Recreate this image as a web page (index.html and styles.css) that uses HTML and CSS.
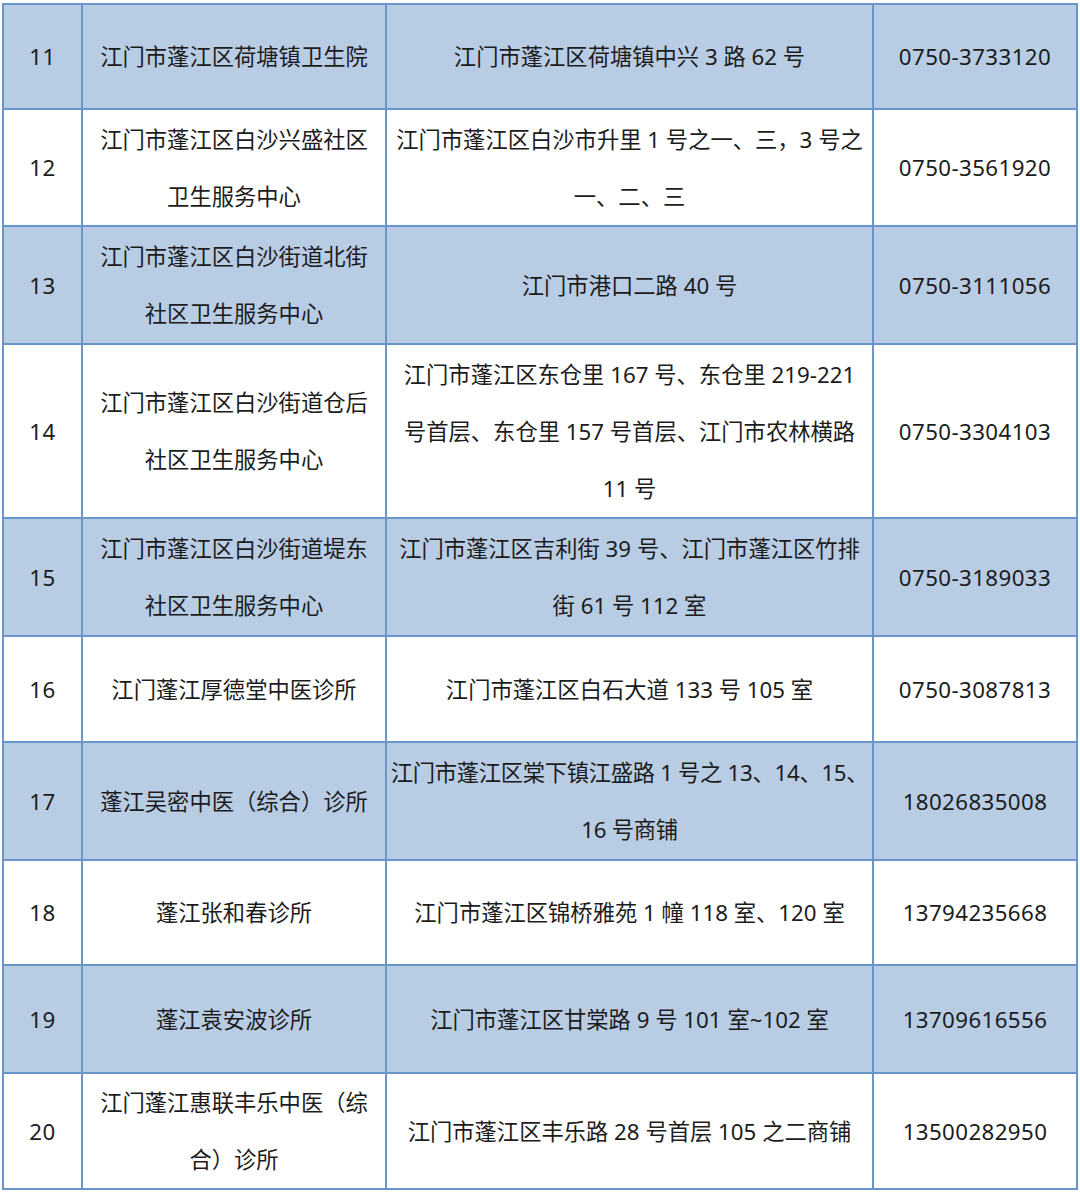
FILE: index.html
```html
<!DOCTYPE html>
<html lang="zh">
<head>
<meta charset="utf-8">
<link rel="stylesheet" href="styles.css">
</head>
<body>
<div class="wrap">
<table class="list">
  <colgroup>
    <col class="c1"><col class="c2"><col class="c3"><col class="c4">
  </colgroup>
  <tr class="alt h105">
    <td>11</td><td>江门市蓬江区荷塘镇卫生院</td><td>江门市蓬江区荷塘镇中兴 3 路 62 号</td><td>0750-3733120</td>
  </tr>
  <tr class="h117">
    <td>12</td><td>江门市蓬江区白沙兴盛社区<br>卫生服务中心</td><td>江门市蓬江区白沙市升里 1 号之一、三，3 号之<br>一、二、三</td><td>0750-3561920</td>
  </tr>
  <tr class="alt h118">
    <td>13</td><td>江门市蓬江区白沙街道北街<br>社区卫生服务中心</td><td>江门市港口二路 40 号</td><td>0750-3111056</td>
  </tr>
  <tr class="h174">
    <td>14</td><td>江门市蓬江区白沙街道仓后<br>社区卫生服务中心</td><td>江门市蓬江区东仓里 167 号、东仓里 219-221<br>号首层、东仓里 157 号首层、江门市农林横路<br>11 号</td><td>0750-3304103</td>
  </tr>
  <tr class="alt h118">
    <td>15</td><td>江门市蓬江区白沙街道堤东<br>社区卫生服务中心</td><td>江门市蓬江区吉利街 39 号、江门市蓬江区竹排<br>街 61 号 112 室</td><td>0750-3189033</td>
  </tr>
  <tr class="h106">
    <td>16</td><td>江门蓬江厚德堂中医诊所</td><td>江门市蓬江区白石大道 133 号 105 室</td><td>0750-3087813</td>
  </tr>
  <tr class="alt h118">
    <td>17</td><td>蓬江吴密中医（综合）诊所</td><td class="tight">江门市蓬江区棠下镇江盛路 1 号之 13、14、15、<br>16 号商铺</td><td>18026835008</td>
  </tr>
  <tr class="h105">
    <td>18</td><td>蓬江张和春诊所</td><td>江门市蓬江区锦桥雅苑 1 幢 118 室、120 室</td><td>13794235668</td>
  </tr>
  <tr class="alt h108">
    <td>19</td><td>蓬江袁安波诊所</td><td>江门市蓬江区甘棠路 9 号 101 室~102 室</td><td>13709616556</td>
  </tr>
  <tr class="h116">
    <td>20</td><td>江门蓬江惠联丰乐中医（综<br>合）诊所</td><td>江门市蓬江区丰乐路 28 号首层 105 之二商铺</td><td>13500282950</td>
  </tr>
</table>
</div>
</body>
</html>
```

FILE: styles.css
```css
html, body {
  margin: 0;
  padding: 0;
  background: #ffffff;
}
.wrap {
  padding: 3px 0 0 2px;
}
.list {
  border-collapse: collapse;
  table-layout: fixed;
  width: 1074px;
  font-family: "Noto Sans", "Noto Sans CJK SC", sans-serif;
  font-size: 22.3px;
  color: #1c1c1c;
}
.c1 { width: 79px; }
.c2 { width: 304px; }
.c3 { width: 487px; }
.c4 { width: 204px; }
.list td {
  border: 2px solid #6a95ca;
  padding: 0 4px;
  text-align: center;
  vertical-align: middle;
  line-height: 57px;
  white-space: nowrap;
  overflow: hidden;
}
.list td:first-child,
.list td:last-child {
  letter-spacing: 0.4px;
}
.list td.tight {
  padding: 0;
  letter-spacing: -0.3px;
}
.alt td { background: #b8cce4; }
.h105 td { height: 103px; }
.h106 td { height: 104px; }
.h108 td { height: 106px; }
.h116 td { height: 114px; }
.h117 td { height: 115px; }
.h118 td { height: 116px; }
.h174 td { height: 172px; }
```
